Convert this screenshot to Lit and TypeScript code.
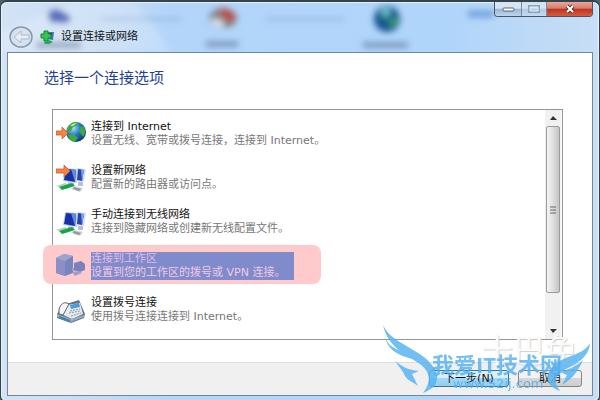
import { LitElement, html, css, svg } from "lit";
import { customElement, property, state } from "lit/decorators.js";

type IconName = "globe" | "router" | "wireless" | "workplace" | "phone";

interface Option {
  icon: IconName;
  title: string;
  detail: string;
}

const OPTIONS: Option[] = [
  { icon: "globe", title: "连接到 Internet", detail: "设置无线、宽带或拨号连接，连接到 Internet。" },
  { icon: "router", title: "设置新网络", detail: "配置新的路由器或访问点。" },
  { icon: "wireless", title: "手动连接到无线网络", detail: "连接到隐藏网络或创建新无线配置文件。" },
  { icon: "workplace", title: "连接到工作区", detail: "设置到您的工作区的拨号或 VPN 连接。" },
  { icon: "phone", title: "设置拨号连接", detail: "使用拨号连接连接到 Internet。" },
];

const arrow = svg`<path d="M0 11h6V7l6 6-6 6v-4H0z" fill="#f58442" stroke="#c65f2b" stroke-width=".8"/>`;

const computers = svg`
  <path d="M9 4l12 1v14L7 17z" fill="#b9c8ea"/>
  <path d="M10 5l10 1-1 12-11-2z" fill="#1531a5"/>
  <path d="M15 5l5 1-1 12z" fill="#6689df"/>
  <path d="M21 4l9 1-2 13-8-1z" fill="#d3def0"/>
  <path d="M22 5l6 1-2 11-5-1z" fill="#2444b4"/>
  <path d="M25 6l3 0-2 11z" fill="#7ba0e6"/>
  <path d="M12 18l6 1v3h-6zM22 18l5 0v4h-5z" fill="#b4bfd0"/>
  <path d="M0 22l9-3 8 3-7 3z" fill="#aed8b8"/>
  <path d="M3 23l13-4 3 3-13 4z" fill="#15a448"/>
  <path d="M18 22l9 2-3 4-9-3z" fill="#cfd5dc"/>
  <path d="M18 23l7 2-2 2-6-2z" fill="#8e99a5"/>`;

const ICONS: Record<IconName, unknown> = {
  globe: svg`
    <defs><radialGradient id="g" cx=".35" cy=".3" r=".8">
      <stop offset="0" stop-color="#a7e6f8"/><stop offset=".45" stop-color="#2878c8"/><stop offset="1" stop-color="#092a72"/>
    </radialGradient></defs>
    <circle cx="20" cy="12" r="10" fill="url(#g)"/>
    <path d="M12 7c3-5 9-6 11-4l-3 3-3 1-2 4-4 1zM25 6l3 1c2 4 1 8-1 10l-2-3-2-3zM12 15l6-1 4 4-3 4c-3 0-6-3-7-7z" fill="#42a83b"/>
    <path d="M14 6c2-2 4-3 7-3l-4 3z" fill="#baf0a5"/>
    ${arrow}`,
  router: svg`${computers}<path d="M0 5h8V1l6 6-6 6V9H0z" fill="#f58442" stroke="#c65f2b" stroke-width=".8"/>`,
  wireless: computers,
  workplace: svg`
    <path d="M0 6l8-4 9 2v17l-8 3-9-3z" fill="#7984bf"/>
    <path d="M0 6l9 3v15l-9-3z" fill="#8b8fc5"/>
    <path d="M0 6l8-4 9 2-8 5z" fill="#9da4d1"/>
    <path d="M16 16h4v3h-4z" fill="#a09bc9"/>
    <path d="M18 11l7-2 4 3v6l-5 2-6-2z" fill="#7881bd"/>
    <path d="M16 20l7-1 3 2-7 3z" fill="#a69bc7"/>`,
  phone: svg`
    <path d="M1 18l6-9 16-5 6 14-1 4-13 5-14-5z" fill="#66727d"/>
    <path d="M3 17l8-8 13-2 3 11-11 5z" fill="#e5eaee"/>
    <path d="M1 18l14 5 13-4v2l-13 5-14-5z" fill="#96adc0"/>
    <path d="M3 14c1-6 5-8 8-7l2 1-6 11-4-1z" fill="#f4f6f8" stroke="#596673"/>
    <path d="M14 9l9-2 1 4-9 2z" fill="#4c9ae0"/>
    <path d="M14 15l10-2M13 17l11-2M15 20l10-3" stroke="#8c99a5" stroke-dasharray="2 1"/>
    <path d="M3 21l11 4" stroke="#3c84b4" stroke-width="2"/>`,
};

@customElement("option-icon")
class OptionIcon extends LitElement {
  @property() name: IconName = "globe";
  static styles = css`
    :host { display: block; }
    .art { display: block; width: 32px; height: 28px; }
  `;
  render() {
    return html`<svg class="art" viewBox="0 0 32 28" aria-hidden="true">${ICONS[this.name]}</svg>`;
  }
}

@customElement("app-root")
class AppRoot extends LitElement {
  @state() private selected = 3;

  static styles = css`
    :host {
      display: block;
      font: 11px/14px "DejaVu Sans", "Noto Sans CJK SC", sans-serif;
      color: #111;
      background: #52636b;
    }
    * { box-sizing: border-box; }
    button { font: inherit; color: inherit; margin: 0; padding: 0; }
    .window {
      position: relative;
      min-height: 100vh;
      display: flex;
      flex-direction: column;
      padding: 0 6px 5px;
      border: 1px solid #34434e;
      border-top-width: 2px;
      border-radius: 7px 7px 6px 6px;
      background: linear-gradient(90deg, #d3e3f5 0, #c3daf4 18%, #b3d5fa 28%, #b0d5fb 75%, #bedaf6 90%, #c8dff5);
      box-shadow: inset 0 0 1px 1px #e5f2fc;
    }
    .backdrop { position: absolute; inset: 0 0 auto; width: 100%; height: 50px; }
    .titlebar { display: flex; align-items: flex-start; height: 50px; position: relative; }
    .heading { display: flex; align-items: center; gap: 6px; padding: 23px 0 0 2px; flex: 1; }
    .back { width: 25px; height: 23px; border: 0; background: none; }
    .back svg, .badge { display: block; }
    .caption { font-size: 11px; font-weight: 400; margin: 0; }
    .title-group { display: flex; align-items: center; gap: 5px; }
    .controls { display: flex; border: 1px solid #45566a; border-top: 0; border-radius: 0 0 4px 4px; overflow: hidden; }
    .control {
      width: 27px; height: 14px; border: 0; border-right: 1px solid #788da4;
      background: linear-gradient(#d7e4f1 0 45%, #9db7d1 50%, #bdd5ec);
      display: grid; place-items: center;
    }
    .control.off { width: 25px; background: linear-gradient(#d4e3f2 0 45%, #b3cae1 50%, #c3daf0); }
    .control.close { width: 45px; border-right: 0; background: linear-gradient(#e7a99c 0, #d57c69 45%, #bd3420 50%, #d65c3b); }
    .page {
      position: relative; flex: 1; display: flex; flex-direction: column;
      border: 1px solid #71879c; background: #fff;
    }
    .main { flex: 1; display: flex; flex-direction: column; padding: 15px 29px 22px 36px; }
    h1 { margin: 0 0 21px; font-size: 15px; line-height: 20px; font-weight: 400; color: #1f3f96; }
    .list { flex: 1; display: flex; margin-left: 8px; border: 1px solid #959595; }
    .options { flex: 1; list-style: none; margin: 0; padding: 10px 0 15px 3px; display: grid; gap: 16px; align-content: start; }
    .option {
      position: relative; z-index: 0; width: 100%; border: 0; background: none; text-align: left;
      display: flex; align-items: center; gap: 3px; height: 28px;
    }
    .text { display: block; white-space: nowrap; color: #777; }
    .title { display: block; color: #111; }
    .detail { display: block; }
    .selected::before {
      content: ""; position: absolute; z-index: -1; left: -13px; top: -7px;
      width: 278px; height: 39px; border-radius: 8px; background: #fecacb;
    }
    .selected .text { width: 203px; background: #7f8bcb; color: #f3c9e4; }
    .selected .title { color: #e5bce6; }
    .scroll { width: 16px; display: flex; flex-direction: column; background: #f1f1f1; margin-right: 1px; }
    .step { height: 16px; border: 0; background: none; display: grid; place-items: center; }
    .thumb {
      flex: 1; margin: 0 1px 30px; border: 1px solid #9b9b9b; border-radius: 2px;
      background: linear-gradient(90deg, #f5f5f5, #e1e1e1 45%, #c5c5c5);
      display: grid; place-items: center;
    }
    .footer {
      height: 33px; padding: 7px 10px 8px; display: flex; justify-content: flex-end; gap: 9px;
      border-top: 1px solid #dedede; background: #f0f0f0;
    }
    .action { height: 17px; line-height: 15px; border: 1px solid #858585; border-radius: 3px; background: linear-gradient(#f2f2f2 45%, #d6d6d6 50%, #cecece); width: 64px; }
    .action.primary { width: 80px; border-color: #3478a0; background: linear-gradient(#d9effb 45%, #a6d7f3 50%, #92cfee); }
    .ghost {
      position: absolute; right: 15px; bottom: 26px; font-size: 32px; line-height: 36px;
      color: #fbfbfb; text-shadow: 1px 1px 1px #d0d0d0; pointer-events: none;
    }
    .mark { position: absolute; right: 0; bottom: 0; width: 212px; height: 72px; pointer-events: none; }
    .wings { position: absolute; inset: 0; width: 100%; height: 100%; overflow: visible; }
    .brand { position: absolute; left: 52px; top: 28px; font: 700 22px/26px "Open Sans", "Noto Sans CJK SC", sans-serif; color: #51aff0; opacity: .8; white-space: nowrap; }
    .site { position: absolute; left: 73px; top: 53px; font-size: 13px; line-height: 16px; color: #51aff0; opacity: .85; }
  `;

  render() {
    return html`
      <div class="window">
        <svg class="backdrop" viewBox="0 0 598 50" preserveAspectRatio="none" aria-hidden="true">
          <defs><filter id="soft" x="-50%" y="-50%" width="200%" height="200%"><feGaussianBlur stdDeviation="3"/></filter></defs>
          <g filter="url(#soft)">
            <path d="M0 50V30L70 0h65l35 50z" fill="#fff" opacity=".2"/>
            <path d="M47 10l10-3 13 8-3 6-18-1z" fill="#596dbd"/>
            <path d="M100 17h80M265 17h78" stroke="#7fa2cd" stroke-width="2" opacity=".8"/>
            <ellipse cx="222" cy="16" rx="14" ry="10" fill="#82858d"/>
            <path d="M220 5l14 7-3 9-11-7z" fill="#bd4636"/>
            <path d="M210 16l12 3v7l-10-3z" fill="#dce7ed"/>
            <path d="M205 42h32M362 43h45M35 43h45" stroke="#526b8e" stroke-width="5" opacity=".65"/>
            <circle cx="386" cy="17" r="13" fill="#17578f"/>
            <path d="M379 9l8-1-3 10zM386 22l11-9-2 11z" fill="#43a85c"/>
            <circle cx="385" cy="10" r="4" fill="#70cbd9"/>
            <path d="M467 12h26" stroke="#588bd0" stroke-width="7" opacity=".7"/>
          </g>
        </svg>
        <header class="titlebar">
          <div class="heading">
            <button class="back" aria-label="返回">
              <svg width="25" height="23" viewBox="0 0 25 23">
                <ellipse cx="12" cy="12" rx="11" ry="10" fill="#d5e2ef" stroke="#8998aa" stroke-width="1.5"/>
                <path d="M5 12l7-6v4h8v4h-8v4z" fill="#e7eef6" stroke="#abb8c9"/>
              </svg>
            </button>
            <div class="title-group">
              <svg class="badge" width="16" height="14" viewBox="0 0 16 14" aria-hidden="true">
                <path d="M7 2l7 0-1 8-6-1z" fill="#4777a5"/>
                <path d="M9 3l3 0-1 4z" fill="#173b7d"/>
                <path d="M4 1h4v3h3v4H8v3H4V8H1V4h3z" fill="#31c94d" stroke="#12852f"/>
                <path d="M4 12l5-2 4 2-4 2H5z" fill="#20a765"/>
              </svg>
              <p class="caption">设置连接或网络</p>
            </div>
          </div>
          <div class="controls">
            <button class="control" aria-label="最小化">
              <svg width="13" height="6" viewBox="0 0 13 6"><rect x="1" y="2" width="11" height="3" rx="1" fill="#fff" stroke="#53657a"/></svg>
            </button>
            <button class="control off" aria-label="最大化" disabled>
              <svg width="12" height="8" viewBox="0 0 12 8"><path d="M1 1h10v6H1z" fill="none" stroke="#8ca3bb" stroke-width="2"/><path d="M2 2h8v4H2z" fill="none" stroke="#e9f1f8"/></svg>
            </button>
            <button class="control close" aria-label="关闭">
              <svg width="12" height="10" viewBox="0 0 12 10"><path d="M3 2l6 6M9 2L3 8" stroke="#5d3334" stroke-width="4"/><path d="M3 2l6 6M9 2L3 8" stroke="#fff" stroke-width="2"/></svg>
            </button>
          </div>
        </header>
        <div class="page">
          <main class="main">
            <h1>选择一个连接选项</h1>
            <div class="list">
              <ul class="options">
                ${OPTIONS.map(
                  (o, i) => html`<li>
                    <button
                      class="option ${i === this.selected ? "selected" : ""}"
                      aria-pressed=${i === this.selected}
                      @click=${() => (this.selected = i)}
                    >
                      <option-icon .name=${o.icon}></option-icon>
                      <span class="text"><span class="title">${o.title}</span><span class="detail">${o.detail}</span></span>
                    </button>
                  </li>`
                )}
              </ul>
              <div class="scroll">
                <button class="step" aria-label="向上滚动"><svg width="7" height="4" viewBox="0 0 7 4"><path d="M0 4l3-4 4 4z" fill="#333"/></svg></button>
                <div class="thumb"><svg width="8" height="8" viewBox="0 0 8 8"><path d="M1 1h6M1 4h6M1 7h6" stroke="#666"/></svg></div>
                <button class="step" aria-label="向下滚动"><svg width="7" height="4" viewBox="0 0 7 4"><path d="M0 0h7L3 4z" fill="#333"/></svg></button>
              </div>
            </div>
          </main>
          <div class="ghost" aria-hidden="true">十巴兔</div>
          <footer class="footer">
            <button class="action primary">下一步(N)</button>
            <button class="action">取消</button>
          </footer>
          <div class="mark">
            <svg class="wings" viewBox="0 0 212 72" aria-hidden="true">
              <g fill="#59b5f2" opacity=".85">
                <path d="M3 2C12 22 42 25 54 45C61 57 56 65 43 70C52 58 50 49 40 41C26 31 8 25 3 2z"/>
                <path d="M5 13C9 28 21 25 38 37C21 34 7 28 5 13z"/>
                <path d="M15 38C23 44 28 47 39 48L32 51L38 63C31 58 26 57 23 49z"/>
                <path d="M210 20C202 34 182 32 172 44C163 56 169 64 180 68C173 59 175 52 184 47C198 40 209 34 210 20z"/>
                <path d="M203 37C195 44 190 46 180 49L187 52L182 62C190 57 197 51 203 37z"/>
              </g>
            </svg>
            <span class="brand">我爱IT技术网</span>
            <span class="site">www.52ij.com</span>
          </div>
        </div>
      </div>
    `;
  }
}
